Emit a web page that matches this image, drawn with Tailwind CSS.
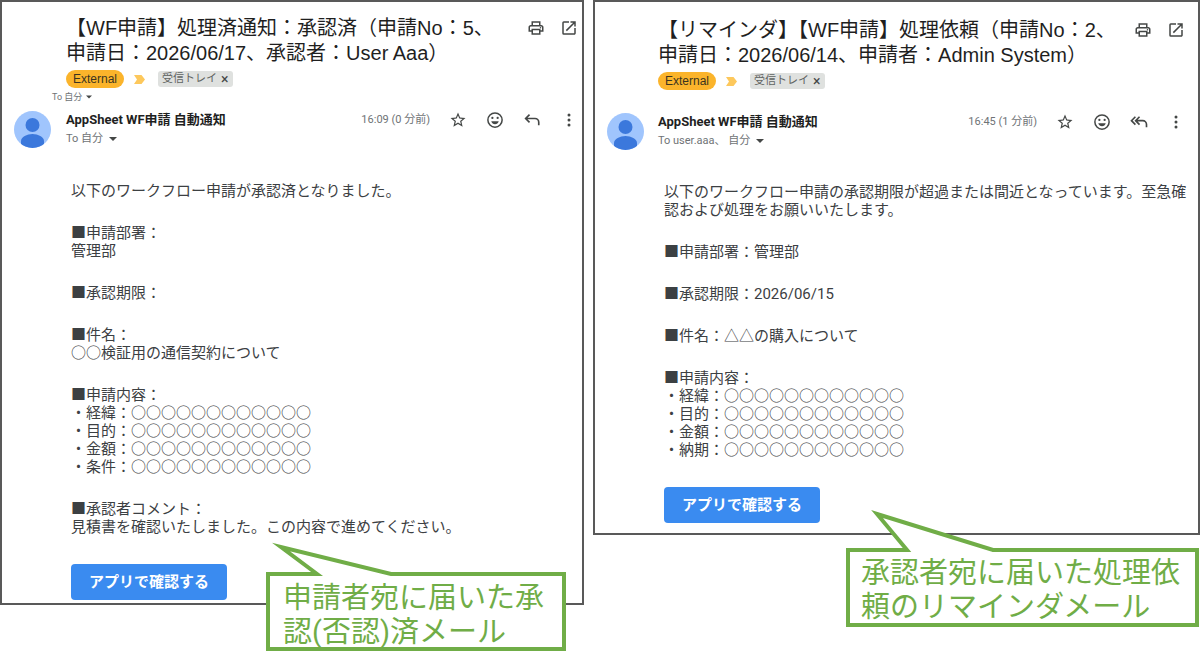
<!DOCTYPE html>
<html lang="ja">
<head>
<meta charset="utf-8">
<meta name="viewport" content="width=device-width, initial-scale=1">
<title>WF申請 通知メール</title>
<script src="https://cdn.jsdelivr.net/npm/@tailwindcss/browser@4"></script>
</head>
<body class="bg-white font-['Roboto','Noto_Sans_CJK_JP',sans-serif] text-[#3c4043]">
<svg class="hidden" aria-hidden="true">
  <symbol id="print" viewBox="0 0 24 24"><path fill="currentColor" d="M19 8h-1V3H6v5H5c-1.660 0-3 1.340-3 3v6h4v4h12v-4h4v-6c0-1.660-1.340-3-3-3zM8 5h8v3H8V5zm8 12v2H8v-4h8v2zm2-2v-2H6v2H4v-4c0-.55.45-1 1-1h14c.55 0 1 .45 1 1v4h-2z"/><circle fill="currentColor" cx="18" cy="11.500" r="1"/></symbol>
  <symbol id="open" viewBox="0 0 24 24"><path fill="currentColor" d="M19 19H5V5h7V3H5a2 2 0 0 0-2 2v14a2 2 0 0 0 2 2h14c1.100 0 2-.9 2-2v-7h-2v7zM14 3v2h3.590l-9.830 9.830 1.410 1.410L19 6.410V10h2V3h-7z"/></symbol>
  <symbol id="star" viewBox="0 0 24 24"><path fill="currentColor" d="M22 9.240l-7.190-.62L12 2 9.190 8.630 2 9.240l5.460 4.730L5.820 21 12 17.270 18.180 21l-1.630-7.030L22 9.240zM12 15.400l-3.760 2.270 1-4.280-3.320-2.880 4.380-.38L12 6.100l1.710 4.040 4.380.38-3.320 2.880 1 4.280L12 15.400z"/></symbol>
  <symbol id="smile" viewBox="0 0 24 24"><circle cx="12" cy="12" r="9.500" fill="none" stroke="currentColor" stroke-width="2"/><circle cx="8.500" cy="9.300" r="1.500" fill="currentColor"/><circle cx="15.500" cy="9.300" r="1.500" fill="currentColor"/><path fill="currentColor" d="M7 13.500h10c-.7 2.400-2.700 4-5 4s-4.300-1.600-5-4z"/></symbol>
  <symbol id="reply" viewBox="0 0 24 24"><path fill="none" stroke="currentColor" stroke-width="2.200" d="M8.700 4.800 3.500 10l5.200 5.200M3.500 10H16a5 5 0 0 1 5 5v4"/></symbol>
  <symbol id="replyall" viewBox="0 0 24 24"><path fill="none" stroke="currentColor" stroke-width="2.200" d="M7.200 5 2 10.200l5.200 5.200M12.700 5l-5.200 5.200 5.200 5.200M7.500 10.200H17a5 5 0 0 1 5 5V19"/></symbol>
  <symbol id="more" viewBox="0 0 24 24"><circle cx="12" cy="5.300" r="2" fill="currentColor"/><circle cx="12" cy="12" r="2" fill="currentColor"/><circle cx="12" cy="18.700" r="2" fill="currentColor"/></symbol>
  <symbol id="caret" viewBox="0 0 8 4"><path fill="currentColor" d="M0 0h8L4 4z"/></symbol>
  <symbol id="marker" viewBox="0 0 11 9"><path fill="#fdc85c" d="M0 0h7.500L11 4.500 7.500 9H0l3-4.500z"/></symbol>
  <symbol id="avatar" viewBox="0 0 37 37"><path fill="#a0c5fd" d="M0 0h37v37H0z"/><circle cx="18.500" cy="14" r="7" fill="#3b78dc"/><path fill="#3b78dc" d="M7 37v-7c0-4 6-7 11.500-7S30 26 30 30v7z"/></symbol>
</svg>

<main class="grid min-h-screen grid-cols-[584fr_607fr] items-start gap-[9px]">

  <article class="relative border-2 border-[#595959] pt-[14px] pb-[3px]">
    <header class="flex items-start justify-between pl-16 pr-1">
      <h1 class="whitespace-nowrap font-['Liberation_Sans','Noto_Sans_CJK_JP',sans-serif] text-xl leading-[25px] text-[#1f1f1f]">【WF申請】処理済通知：承認済（申請No：5、<br>申請日：2026/06/17、承認者：User Aaa）</h1>
      <div class="flex gap-[15px] pt-[3px] text-[#444746]">
        <button type="button" aria-label="印刷"><svg class="block size-[18px]"><use href="#print"/></svg></button>
        <button type="button" aria-label="新しいウィンドウ"><svg class="block size-[18px]"><use href="#open"/></svg></button>
      </div>
    </header>
    <div class="mt-1 flex h-[18px] items-center pl-16">
      <span class="rounded-full bg-[#fbb42b] px-[7px] font-['Liberation_Sans',sans-serif] text-xs leading-[18px] text-[#3c3420]">External</span>
      <svg class="ml-[10px] h-[9px] w-[11px]"><use href="#marker"/></svg>
      <span class="ml-[13px] flex h-4 items-center gap-1 rounded-[3px] bg-[#dfe1df] px-1 text-[11px] leading-4 text-[#5f6462]">受信トレイ<button type="button" aria-label="ラベルを削除" class="text-sm leading-4 text-[#444746]">×</button></span>
    </div>
    <button type="button" class="mt-[3px] ml-[50px] flex h-3 items-center gap-1 text-[9px] leading-3 text-[#6f7376]">To 自分<svg class="h-1 w-1.5 text-[#444746]"><use href="#caret"/></svg></button>
    <div class="mt-2 flex items-start pl-3 pr-1">
      <svg class="size-[37px] shrink-0 rounded-full"><use href="#avatar"/></svg>
      <div class="ml-[15px] grow">
        <h2 class="text-[13px] leading-[18px] font-bold text-[#1f1f1f]">AppSheet WF申請 自動通知</h2>
        <button type="button" class="mt-px flex items-center gap-1.5 text-[11px] leading-[18px] text-[#6f7376]">To 自分<svg class="h-1 w-2 text-[#444746]"><use href="#caret"/></svg></button>
      </div>
      <div class="flex items-center gap-[19px] text-[#444746]">
        <time class="text-[11px] leading-[18px] text-[#6f7376]">16:09 (0 分前)</time>
        <button type="button" aria-label="スター"><svg class="block size-[18px]"><use href="#star"/></svg></button>
        <button type="button" aria-label="リアクション"><svg class="block size-[18px]"><use href="#smile"/></svg></button>
        <button type="button" aria-label="返信"><svg class="block size-[18px]"><use href="#reply"/></svg></button>
        <button type="button" aria-label="その他"><svg class="block size-[18px]"><use href="#more"/></svg></button>
      </div>
    </div>
    <div class="flex flex-col items-start gap-6 pt-[34px] pl-[69px] text-[15px] leading-[18px]">
      <p>以下のワークフロー申請が承認済となりました。</p>
      <p>■申請部署：<br>管理部</p>
      <p>■承認期限：</p>
      <p>■件名：<br>○○検証用の通信契約について</p>
      <p>■申請内容：<br>・経緯：○○○○○○○○○○○○<br>・目的：○○○○○○○○○○○○<br>・金額：○○○○○○○○○○○○<br>・条件：○○○○○○○○○○○○</p>
      <p>■承認者コメント：<br>見積書を確認いたしました。この内容で進めてください。</p>
      <a href="#" class="mt-1 rounded-sm bg-[#3a8bf0] px-[18px] text-[15px] leading-9 font-bold text-white">アプリで確認する</a>
    </div>
    <aside class="absolute top-[540px] left-[264px] h-[109px] w-[300px] pt-[39px] pl-[17px] text-[29px] leading-[34px] whitespace-nowrap text-[#70ad47]">
      <svg class="absolute inset-0 h-full w-full overflow-visible" viewBox="0 0 300 109"><path d="M2 32H51L15 5 125 32H298V107H2z" fill="#fff" stroke="#70ad47" stroke-width="4" stroke-miterlimit="10"/></svg>
      <p class="relative">申請者宛に届いた承<br>認(否認)済メール</p>
    </aside>
  </article>

  <article class="relative border-2 border-[#595959] pt-4 pb-[10px]">
    <header class="flex items-start justify-between pr-[13px] pl-[63px]">
      <h1 class="whitespace-nowrap font-['Liberation_Sans','Noto_Sans_CJK_JP',sans-serif] text-xl leading-[25px] text-[#1f1f1f]">【リマインダ】【WF申請】処理依頼（申請No：2、<br>申請日：2026/06/14、申請者：Admin System）</h1>
      <div class="flex gap-[15px] pt-[3px] text-[#444746]">
        <button type="button" aria-label="印刷"><svg class="block size-[18px]"><use href="#print"/></svg></button>
        <button type="button" aria-label="新しいウィンドウ"><svg class="block size-[18px]"><use href="#open"/></svg></button>
      </div>
    </header>
    <div class="mt-1 flex h-[18px] items-center pl-[63px]">
      <span class="rounded-full bg-[#fbb42b] px-[7px] font-['Liberation_Sans',sans-serif] text-xs leading-[18px] text-[#3c3420]">External</span>
      <svg class="ml-[10px] h-[9px] w-[11px]"><use href="#marker"/></svg>
      <span class="ml-[13px] flex h-4 items-center gap-1 rounded-[3px] bg-[#dfe1df] px-1 text-[11px] leading-4 text-[#5f6462]">受信トレイ<button type="button" aria-label="ラベルを削除" class="text-sm leading-4 text-[#444746]">×</button></span>
    </div>
    <div class="mt-[23px] flex items-start pr-[13px] pl-3">
      <svg class="size-[37px] shrink-0 rounded-full"><use href="#avatar"/></svg>
      <div class="ml-[14px] grow">
        <h2 class="text-[13px] leading-[18px] font-bold text-[#1f1f1f]">AppSheet WF申請 自動通知</h2>
        <button type="button" class="mt-px flex items-center gap-1.5 text-[11px] leading-[18px] text-[#6f7376]">To user.aaa、 自分<svg class="h-1 w-2 text-[#444746]"><use href="#caret"/></svg></button>
      </div>
      <div class="flex items-center gap-[19px] text-[#444746]">
        <time class="text-[11px] leading-[18px] text-[#6f7376]">16:45 (1 分前)</time>
        <button type="button" aria-label="スター"><svg class="block size-[18px]"><use href="#star"/></svg></button>
        <button type="button" aria-label="リアクション"><svg class="block size-[18px]"><use href="#smile"/></svg></button>
        <button type="button" aria-label="全員に返信"><svg class="block size-[18px]"><use href="#replyall"/></svg></button>
        <button type="button" aria-label="その他"><svg class="block size-[18px]"><use href="#more"/></svg></button>
      </div>
    </div>
    <div class="flex flex-col items-start gap-6 pt-[33px] pl-[69px] text-[15px] leading-[18px]">
      <p class="whitespace-nowrap">以下のワークフロー申請の承認期限が超過または間近となっています。至急確<br>認および処理をお願いいたします。</p>
      <p>■申請部署：管理部</p>
      <p>■承認期限：2026/06/15</p>
      <p>■件名：△△の購入について</p>
      <p>■申請内容：<br>・経緯：○○○○○○○○○○○○<br>・目的：○○○○○○○○○○○○<br>・金額：○○○○○○○○○○○○<br>・納期：○○○○○○○○○○○○</p>
      <a href="#" class="mt-1 rounded-sm bg-[#3a8bf0] px-[18px] text-[15px] leading-9 font-bold text-white">アプリで確認する</a>
    </div>
    <aside class="absolute top-[508px] left-[251px] h-[117px] w-[353px] pt-[46px] pl-[15px] text-[29px] leading-[34px] whitespace-nowrap text-[#70ad47]">
      <svg class="absolute inset-0 h-full w-full overflow-visible" viewBox="0 0 353 117"><path d="M2 40H61L31 4 147 40H351V115H2z" fill="#fff" stroke="#70ad47" stroke-width="4" stroke-miterlimit="10"/></svg>
      <p class="relative">承認者宛に届いた処理依<br>頼のリマインダメール</p>
    </aside>
  </article>

</main>
</body>
</html>
